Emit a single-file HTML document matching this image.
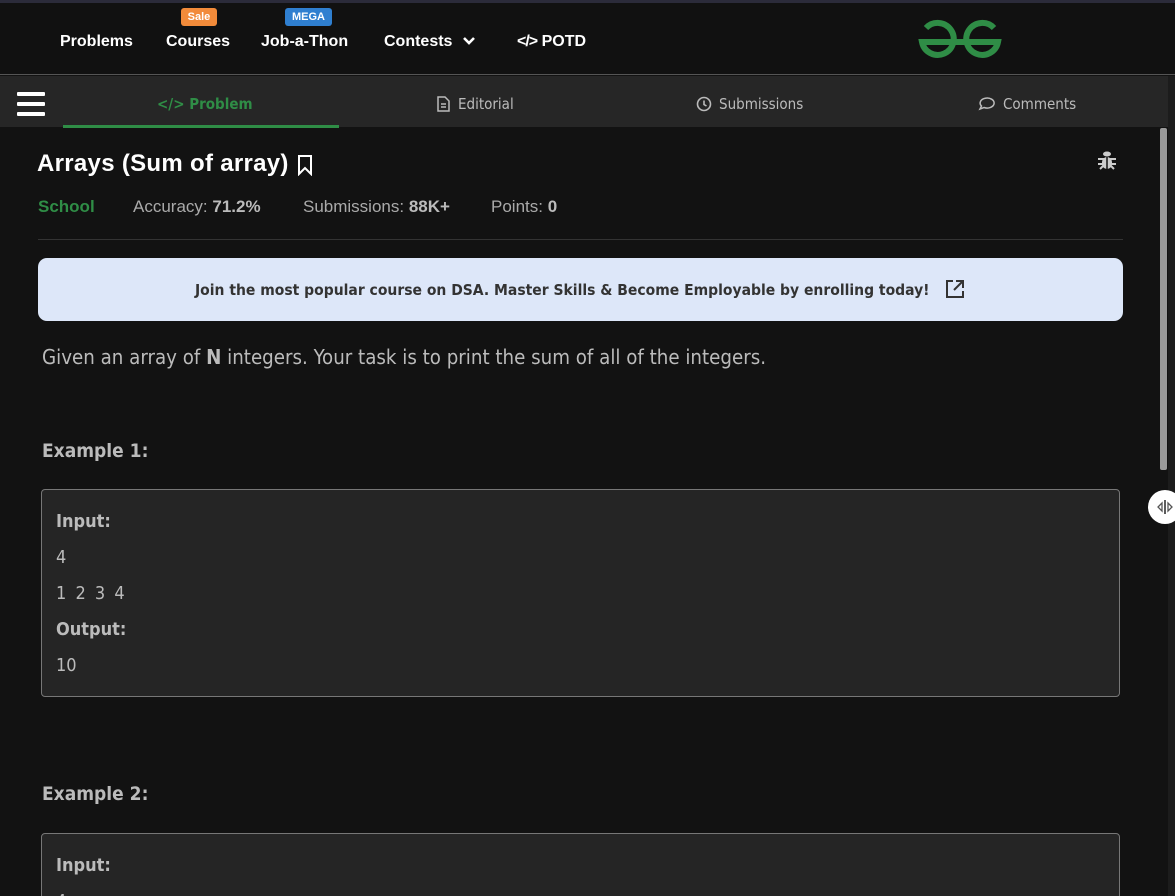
<!DOCTYPE html>
<html><head><meta charset="utf-8"><style>
*{margin:0;padding:0;box-sizing:border-box}
html,body{width:1175px;height:896px;overflow:hidden}
body{background:#121212;position:relative;font-family:"Liberation Sans",sans-serif}
.abs{position:absolute}
.top{left:0;top:0;width:1175px;height:75px;background:#111;border-top:3px solid #2b2b3a;border-bottom:1px solid #555}
.nav{position:absolute;top:33px;color:#fff;font-weight:bold;font-size:16px;white-space:nowrap}
.badge{position:absolute;top:8px;height:18px;border-radius:3px;color:#fff;font-size:11px;font-weight:bold;text-align:center;line-height:18px}
.tabs{left:0;top:76px;width:1168px;height:51px;background:#262626}
.tab{position:absolute;top:95px;font-family:"DejaVu Sans Condensed","Liberation Sans",sans-serif;font-size:15px;color:#bbb;white-space:nowrap}
.cond{font-family:"DejaVu Sans Condensed","Liberation Sans",sans-serif}
.box{position:absolute;left:41px;width:1079px;background:#252525;border:1px solid #777;border-radius:4px}
.lbl{position:absolute;left:14px;font-weight:bold;color:#bbb;font-size:18px}
.val{position:absolute;left:14px;color:#bbb;font-size:18px;word-spacing:4px}
</style></head><body>
<div class="abs top"></div>
<div class="nav" style="left:60px">Problems</div>
<div class="nav" style="left:166px">Courses</div>
<div class="badge" style="left:181px;width:36px;background:#f28b3a">Sale</div>
<div class="nav" style="left:261px">Job-a-Thon</div>
<div class="badge" style="left:285px;width:47px;background:#2f7fd0">MEGA</div>
<div class="nav" style="left:384px">Contests</div>
<svg class="abs" style="left:462px;top:36px" width="14" height="10" viewBox="0 0 14 10"><path d="M2 2L7 7L12 2" stroke="#fff" stroke-width="2.6" fill="none"/></svg>
<div class="nav" style="left:517px"><span style="letter-spacing:-1px">&lt;/&gt;</span> POTD</div>
<svg class="abs" style="left:914px;top:16px" width="92" height="52" viewBox="914 14 92 52"><path d="M926 26 A16 16 0 1 1 922 40 H998 A16 16 0 1 1 994 26" stroke="#2f8d46" stroke-width="6" fill="none"/></svg>

<div class="abs tabs"></div>
<div class="abs" style="left:17px;top:92px;width:28px;height:4px;background:#fff;border-radius:1px"></div>
<div class="abs" style="left:17px;top:102px;width:28px;height:4px;background:#fff;border-radius:1px"></div>
<div class="abs" style="left:17px;top:112px;width:28px;height:4px;background:#fff;border-radius:1px"></div>
<div class="abs" style="left:63px;top:125px;width:276px;height:3px;background:#2f8d46"></div>
<div class="tab" style="left:157px;color:#2f8d46;font-weight:bold">&lt;/&gt; Problem</div>
<svg class="abs" style="left:437px;top:96px" width="13" height="16" viewBox="0 0 13 16"><path d="M1 1H8L12 5V15H1Z M4 8H9M4 11H9" stroke="#bbb" stroke-width="1.5" fill="none"/></svg>
<div class="tab" style="left:458px">Editorial</div>
<svg class="abs" style="left:696px;top:96px" width="16" height="16" viewBox="0 0 16 16"><circle cx="8" cy="8" r="6.5" stroke="#bbb" stroke-width="1.6" fill="none"/><path d="M8 4.5V8.5L10.5 10" stroke="#bbb" stroke-width="1.6" fill="none"/></svg>
<div class="tab" style="left:719px">Submissions</div>
<svg class="abs" style="left:977px;top:96px" width="20" height="16" viewBox="0 0 20 16"><path d="M3 13 L4.5 10 A7 5 0 1 1 7 11.5 Z" stroke="#bbb" stroke-width="1.5" fill="none"/></svg>
<div class="tab" style="left:1003px">Comments</div>
<div class="abs" style="left:1168px;top:76px;width:7px;height:820px;background:#1c1c1c"></div>
<div class="abs" style="left:1160px;top:128px;width:7px;height:342px;background:#9a9a9a;border-radius:2px"></div>

<div class="abs" style="left:37px;top:150px;color:#fff;font-size:24px;font-weight:bold;letter-spacing:0.3px">Arrays (Sum of array)</div>
<svg class="abs" style="left:296px;top:154px" width="18" height="22" viewBox="0 0 18 22"><path d="M3 2H15V20L9 14L3 20Z" stroke="#fff" stroke-width="2" fill="none"/></svg>
<svg class="abs" style="left:1096px;top:149px" width="22" height="22" viewBox="0 0 22 22"><ellipse cx="11" cy="5" rx="4" ry="2.5" fill="#ccc"/><rect x="6" y="8" width="10" height="12" rx="5" fill="#ccc"/><path d="M2 10H20M2 15H20M4 20L7 17M18 20L15 17" stroke="#ccc" stroke-width="2"/><path d="M11 8V20" stroke="#121212" stroke-width="1.5"/></svg>
<div class="abs" style="left:38px;top:197px;font-size:17px;color:#2f8d46;font-weight:bold">School</div>
<div class="abs" style="left:133px;top:197px;font-size:17px;color:#aaa">Accuracy: <b style="color:#bbb">71.2%</b></div>
<div class="abs" style="left:303px;top:197px;font-size:17px;color:#aaa">Submissions: <b style="color:#bbb">88K+</b></div>
<div class="abs" style="left:491px;top:197px;font-size:17px;color:#aaa">Points: <b style="color:#bbb">0</b></div>
<div class="abs" style="left:38px;top:239px;width:1085px;height:1px;background:#333"></div>

<div class="abs" style="left:38px;top:258px;width:1085px;height:63px;background:#dde7f9;border-radius:9px"></div>
<div class="abs cond" style="left:195px;top:281px;font-size:15.5px;font-weight:bold;color:#333;white-space:nowrap">Join the most popular course on DSA. Master Skills &amp; Become Employable by enrolling today!</div>
<svg class="abs" style="left:944px;top:278px" width="22" height="22" viewBox="0 0 22 22"><path d="M9 3H3V19H19V13M12 3H19V10M19 3L10 12" stroke="#333" stroke-width="2" fill="none"/></svg>

<div class="abs cond" style="left:42px;top:345px;font-size:20.3px;color:#bbb;white-space:nowrap">Given an array of <b>N</b> integers. Your task is to print the sum of all of the integers.</div>
<div class="abs cond" style="left:42px;top:440px;font-size:19px;color:#bbb;font-weight:bold">Example 1:</div>
<div class="box cond" style="top:489px;height:208px">
<div class="lbl" style="top:21px">Input:</div>
<div class="val" style="top:57px">4</div>
<div class="val" style="top:93px">1 2 3 4</div>
<div class="lbl" style="top:129px">Output:</div>
<div class="val" style="top:165px">10</div>
</div>
<div class="abs cond" style="left:42px;top:783px;font-size:19px;color:#bbb;font-weight:bold">Example 2:</div>
<div class="box cond" style="top:833px;height:80px">
<div class="lbl" style="top:21px">Input:</div>
<div class="val" style="top:57px">4</div>
</div>
<div class="abs" style="left:1148px;top:490px;width:34px;height:34px;border-radius:50%;background:#fff"></div>
<svg class="abs" style="left:1155px;top:498px" width="20" height="18" viewBox="0 0 20 18"><path d="M7 5L3 9L7 13Z M13 5L17 9L13 13Z" fill="none" stroke="#555" stroke-width="1.3"/><path d="M10 2V16" stroke="#333" stroke-width="1.6"/></svg>
</body></html>
